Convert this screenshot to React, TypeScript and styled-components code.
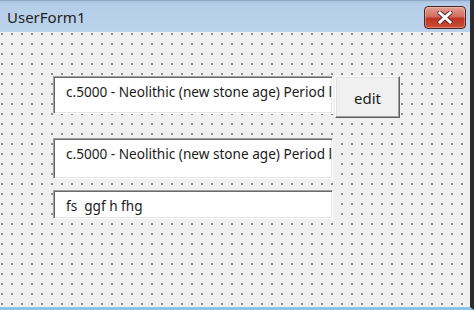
import styled, { createGlobalStyle } from 'styled-components';

const GlobalStyle = createGlobalStyle`
  html, body {
    margin: 0;
    padding: 0;
    background: #f0f0f0;
  }
`;

const Window = styled.div`
  width: 474px;
  height: 310px;
  box-sizing: border-box;
  display: flex;
  flex-direction: column;
  border-right: 4px solid #2a2c30;
  border-bottom: 3px solid #8ec5e6;
  font-family: 'Noto Sans', 'Open Sans', sans-serif;
  color: #1b1b1b;
  overflow: hidden;
`;

const TitleBar = styled.div`
  height: 31px;
  flex-shrink: 0;
  display: flex;
  align-items: center;
  justify-content: space-between;
  padding: 0 4px 0 7px;
  background: linear-gradient(#a7c1df 0px, #b6cde8 3px, #bcd3ec 100%);
  border-top: 1px solid #8fa9c7;
`;

const Title = styled.span`
  font-size: 15px;
  color: #1e1e1e;
  margin-top: 1px;
`;

const CloseButton = styled.div`
  width: 42px;
  height: 23px;
  margin-top: 1px;
  box-sizing: border-box;
  display: flex;
  align-items: center;
  justify-content: center;
  border: 1px solid #4d2622;
  border-radius: 4px;
  background: linear-gradient(#e3a096 0%, #d26d5f 45%, #be3421 55%, #cc5039 100%);
  box-shadow: inset 0 0 0 1px rgba(255, 215, 205, 0.4);
`;

const Body = styled.div`
  flex: 1;
  display: flex;
  flex-direction: column;
  padding: 44px 0 0 53px;
  background-color: #f0f0f0;
  background-image: radial-gradient(circle at center, #6e6e6e 0.6px, transparent 1.1px);
  background-size: 10px 10px;
  background-position: -3px -3px;
`;

const Row = styled.div<{ $gap?: number }>`
  display: flex;
  align-items: flex-start;
  gap: 2px;
  margin-bottom: ${({ $gap }) => $gap ?? 0}px;
`;

const TextBox = styled.div<{ $height: number }>`
  width: 280px;
  height: ${({ $height }) => $height}px;
  box-sizing: border-box;
  background: #ffffff;
  border: 1px solid;
  border-color: #a0a0a0 #ffffff #ffffff #a0a0a0;
  box-shadow: inset 1px 1px 0 #6a6a6a, inset -1px -1px 0 #e6e6e6;
  padding: 5px 0 0 12px;
  font-size: 13.6px;
  line-height: 20px;
  white-space: nowrap;
  overflow: hidden;
  text-overflow: clip;
`;

const Button = styled.div`
  width: 65px;
  height: 42px;
  box-sizing: border-box;
  display: flex;
  align-items: center;
  justify-content: center;
  padding-top: 1px;
  background: #f0f0f0;
  border: 1px solid;
  border-color: #ffffff #5f5f5f #5f5f5f #ffffff;
  box-shadow: inset -1px -1px 0 #a0a0a0, inset 1px 1px 0 #e3e3e3;
  font-size: 15px;
`;

const CloseIcon = () => (
  <svg width="16" height="13" viewBox="0 0 16 13">
    <path d="M3 2 L13 11 M13 2 L3 11" stroke="#5a2a24" strokeWidth="5" strokeLinecap="round" />
    <path d="M3 2 L13 11 M13 2 L3 11" stroke="#ffffff" strokeWidth="3" strokeLinecap="square" />
  </svg>
);

const App = () => {
  const period = 'c.5000 - Neolithic (new stone age) Period lasting until c.2000';

  return (
    <>
      <GlobalStyle />
      <Window>
        <TitleBar>
          <Title>UserForm1</Title>
          <CloseButton>
            <CloseIcon />
          </CloseButton>
        </TitleBar>
        <Body>
          <Row $gap={20}>
            <TextBox $height={38}>{period}</TextBox>
            <Button>edit</Button>
          </Row>
          <Row $gap={11}>
            <TextBox $height={41}>{period}</TextBox>
          </Row>
          <Row>
            <TextBox $height={29}>fs&nbsp;&nbsp;ggf h fhg</TextBox>
          </Row>
        </Body>
      </Window>
    </>
  );
};

export default App;
